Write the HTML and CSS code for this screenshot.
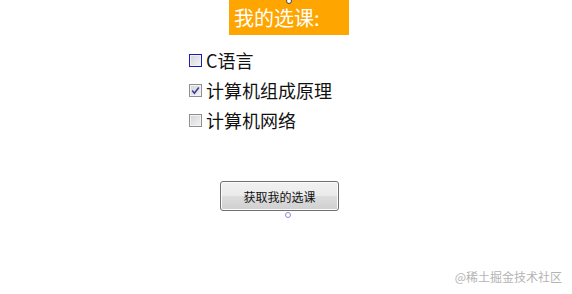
FILE: index.html
```html
<!DOCTYPE html>
<html lang="zh">
<head>
<meta charset="utf-8">
<title>我的选课</title>
<link rel="stylesheet" href="styles.css">
</head>
<body>
<div class="page">
  <div class="title">我的选课:</div>
  <div class="courses">
    <label class="row"><span class="box focus"></span><span class="name">C语言</span></label>
    <label class="row"><span class="box"><svg width="9" height="9" viewBox="0 0 9 9"><path d="M1.2 4.6 L3.4 7.2 L7.8 1.4" fill="none" stroke="#3a3aa8" stroke-width="1.6"/></svg></span><span class="name">计算机组成原理</span></label>
    <label class="row"><span class="box"></span><span class="name">计算机网络</span></label>
  </div>
  <div class="actions">
    <button class="btn" type="button">获取我的选课</button>
  </div>
  <span class="dot top"></span>
  <span class="dot bottom"></span>
  <div class="mark">@稀土掘金技术社区</div>
</div>
</body>
</html>
```
FILE: styles.css
```css
html, body {
  margin: 0;
  padding: 0;
  background: #ffffff;
}
.page {
  position: relative;
  width: 572px;
  height: 294px;
  overflow: hidden;
  font-family: "Noto Sans CJK SC", "Noto Sans", sans-serif;
  color: #111;
}
.title {
  margin-left: 229px;
  width: 120px;
  height: 35px;
  box-sizing: border-box;
  padding-left: 5px;
  background: #ffa500;
  color: #ffffff;
  font-size: 20px;
  line-height: 35px;
}
.courses {
  margin-top: 10px;
  margin-left: 189px;
  display: flex;
  flex-direction: column;
}
.row {
  display: flex;
  align-items: center;
  height: 30px;
  gap: 4px;
}
.box {
  width: 13px;
  height: 13px;
  box-sizing: border-box;
  border: 1px solid #8f8f8f;
  background: linear-gradient(135deg, #d4d4d4, #f4f4f4);
  box-shadow: inset 0 0 0 1px #f2f2f2;
  display: flex;
  align-items: center;
  justify-content: center;
}
.box.focus {
  border-color: #1a1ab8;
}
.name {
  font-size: 18px;
  line-height: 22px;
  color: #111;
}
.actions {
  margin-top: 46px;
  margin-left: 220px;
}
.btn {
  width: 119px;
  height: 30px;
  border: 1px solid #707070;
  border-radius: 3px;
  background: linear-gradient(#f2f2f2 0%, #ebebeb 48%, #dddddd 52%, #cfcfcf 100%);
  box-shadow: inset 0 0 0 1px #fcfcfc;
  font-family: "Noto Sans CJK SC", sans-serif;
  font-size: 12px;
  color: #111;
  padding: 0;
}
.dot {
  position: absolute;
  width: 4px;
  height: 4px;
  border-radius: 50%;
}
.dot.top {
  left: 286px;
  top: -2px;
  border: 1px solid #444;
  background: #fff;
}
.dot.bottom {
  left: 285px;
  top: 212px;
  border: 1px solid #8a8ad8;
  background: #fff;
}
.mark {
  position: absolute;
  right: 10px;
  bottom: 9px;
  font-size: 12px;
  color: #b4b4b4;
  line-height: 16px;
}
```
